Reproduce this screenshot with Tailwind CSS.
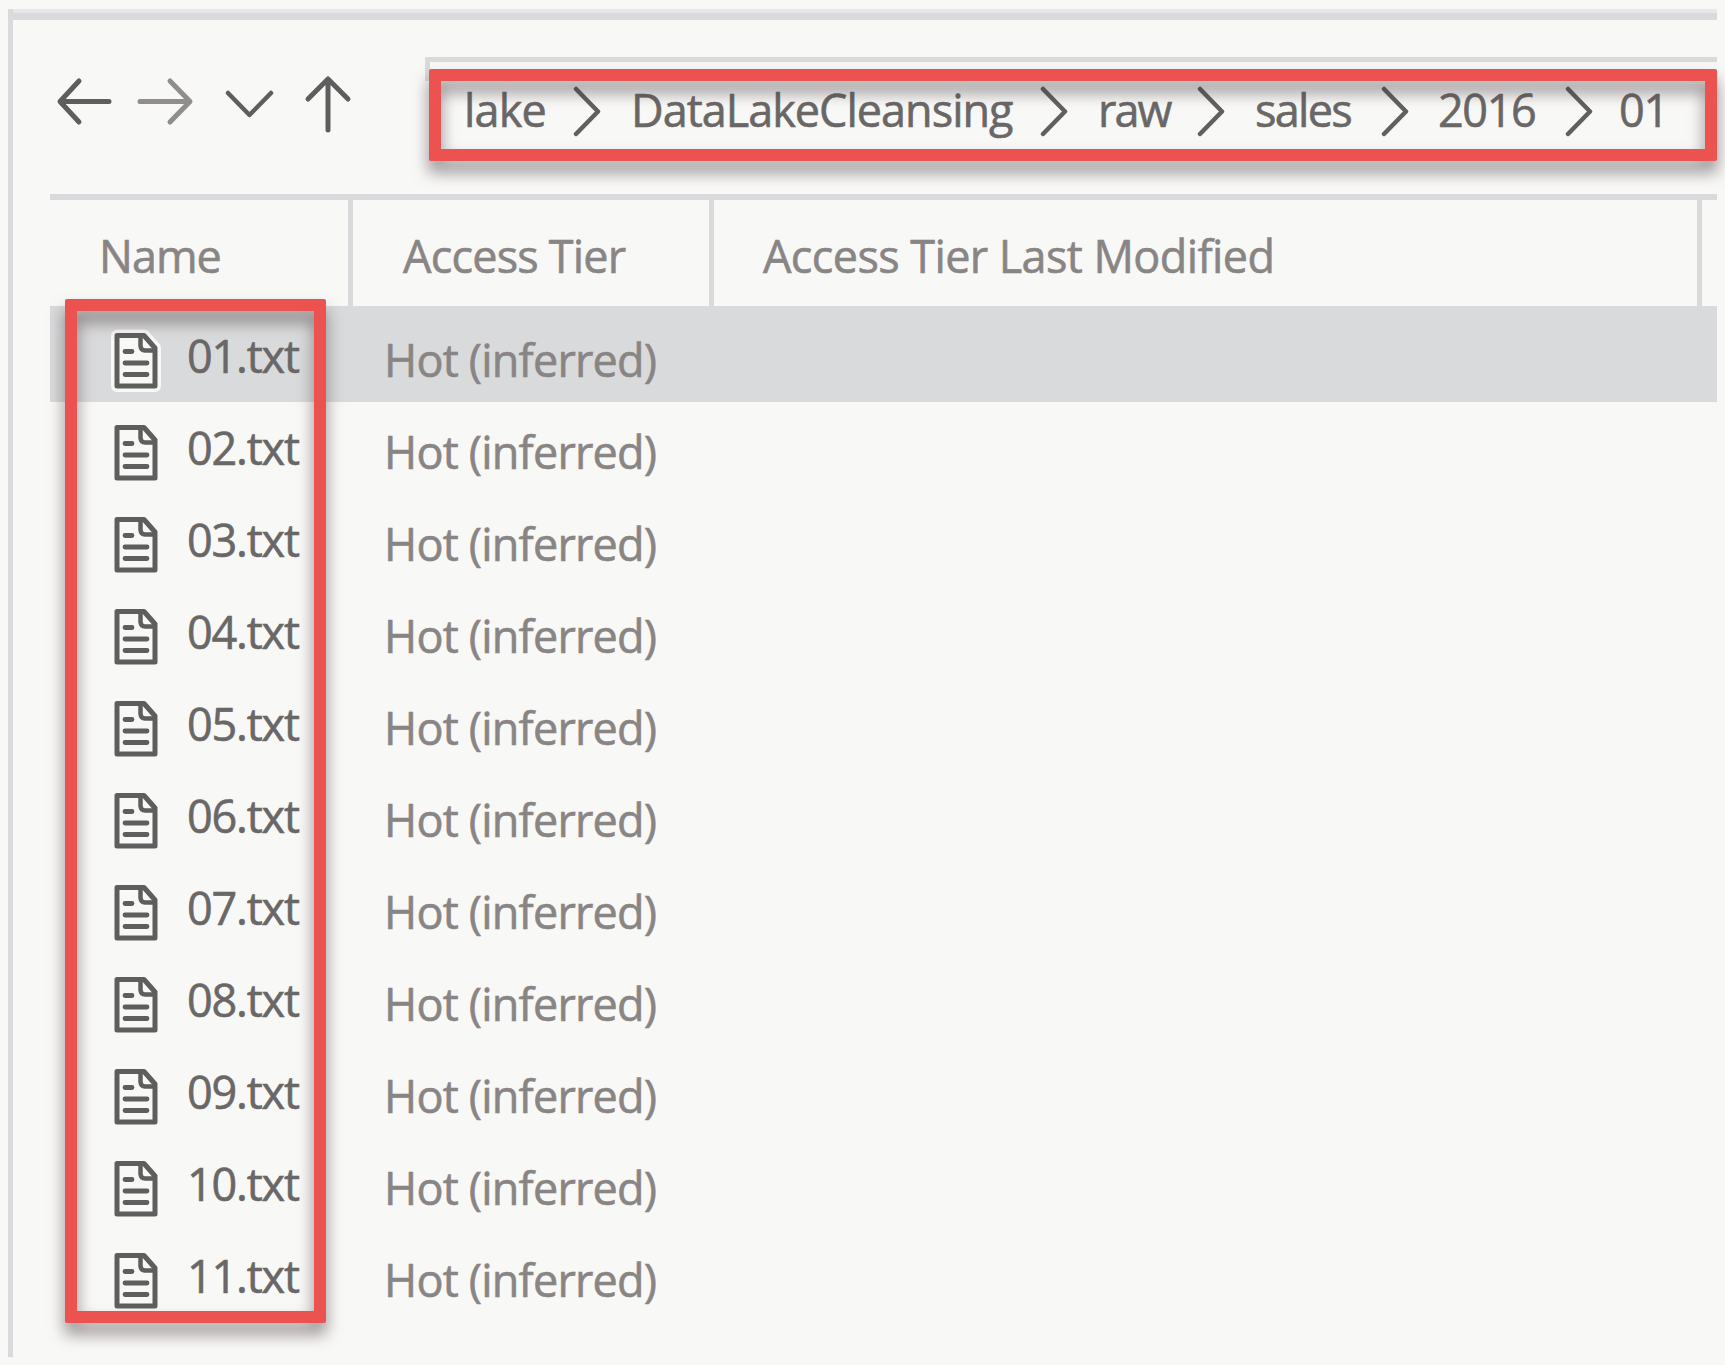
<!DOCTYPE html>
<html lang="en">
<head>
<meta charset="utf-8">
<title>Storage Explorer</title>
<script src="https://cdn.jsdelivr.net/npm/@tailwindcss/browser@4"></script>
</head>
<body class="relative h-[1365px] w-[1725px] overflow-hidden bg-[#f8f8f7] pt-[9px] pl-2 font-['Open_Sans','Noto_Sans',sans-serif] text-[45px] leading-[60px] whitespace-nowrap text-[#8a8585] [-webkit-text-stroke:0.6px_currentColor]">
  <svg class="hidden">
    <symbol id="chev" viewBox="0 0 30 52"><path d="M3 3 25 25.500 3 48" fill="none" stroke="#606060" stroke-width="4.500" stroke-linecap="round" stroke-linejoin="round"/></symbol>
    <symbol id="file" viewBox="0 0 48 60">
      <path d="M5 4.500H32L43 17V55H5Z" fill="#f8f8f7" stroke="#5e5e5e" stroke-width="5" stroke-linejoin="round"/>
      <path d="M28.500 5V15Q29 19.500 33 19.500H43" fill="none" stroke="#5e5e5e" stroke-width="4.500" stroke-linejoin="round"/>
      <path d="M13 20.500H20M13 32H35M13 43.500H35" fill="none" stroke="#5e5e5e" stroke-width="4.800" stroke-linecap="round"/>
    </symbol>
  </svg>

  <main class="h-[1348px] w-[1709px] border-l-[5px] border-[#dadadc]">
    <div class="h-[11px] border-t-4 border-[#e7e7e9] bg-[#d9dadc]"></div>

    <nav class="flex h-[174px]">
      <div class="flex w-[412px] pt-[52px] pl-[42px]">
        <svg class="h-[64px] w-[320px]" viewBox="55 72 320 64" fill="none" stroke="#5e5e5e" stroke-width="5" stroke-linecap="round" stroke-linejoin="round">
          <path d="M109 101.500H61M79 81 60 101.500 79 122"/>
          <path d="M140 101.500H189M170 81 190 101.500 170 122" stroke="#918d8d"/>
          <path d="M228 93 249.500 115 271 93" stroke-width="4.500"/>
          <path d="M328 130V80M308 99 328 79 348 99"/>
        </svg>
      </div>
      <div class="mt-[37px] flex h-[24px] flex-1 items-start border-t-[5px] border-l-[5px] border-[#dadadc] pt-[18px] pl-[34px] text-[#6a6767]">
        <span class="w-[109px] tracking-[-0.8px]">lake</span>
        <svg class="mt-[6px] mr-[28px] h-[52px] w-[30px] shrink-0"><use href="#chev"/></svg>
        <span class="w-[409px] tracking-[-1px]">DataLakeCleansing</span>
        <svg class="mt-[6px] mr-[28px] h-[52px] w-[30px] shrink-0"><use href="#chev"/></svg>
        <span class="w-[99px] tracking-[-1.9px]">raw</span>
        <svg class="mt-[6px] mr-[28px] h-[52px] w-[30px] shrink-0"><use href="#chev"/></svg>
        <span class="w-[126px] tracking-[-1.7px]">sales</span>
        <svg class="mt-[6px] mr-[27px] h-[52px] w-[30px] shrink-0"><use href="#chev"/></svg>
        <span class="w-[127px] tracking-[-1.4px]">2016</span>
        <svg class="mt-[6px] mr-[24px] h-[52px] w-[30px] shrink-0"><use href="#chev"/></svg>
        <span class="tracking-[-1.2px]">01</span>
      </div>
    </nav>

    <section class="ml-[37px]">
      <header class="flex h-[112px] border-t-[6px] border-[#dadadc]">
        <div class="w-[303px] border-r-[5px] border-[#dadadc] pt-[26px] pl-[49px] tracking-[-1px]">Name</div>
        <div class="w-[361px] border-r-[5px] border-[#dadadc] pt-[26px] pl-[50px] tracking-[-0.8px]">Access Tier</div>
        <div class="w-[988px] border-r-[5px] border-[#dadadc] pt-[26px] pl-[49px] tracking-[-0.6px]">Access Tier Last Modified</div>
      </header>
      <div id="rows"></div>
    </section>
  </main>

  <div class="absolute top-[69px] left-[429px] h-[92px] w-[1288px] rounded-[2px] border-[12px] border-[#ec524f] drop-shadow-[0_11px_8px_rgba(60,45,45,0.55)]"></div>
  <div class="absolute top-[299px] left-[65px] h-[1024px] w-[261px] rounded-[2px] border-[12px] border-[#ec524f] drop-shadow-[0_11px_8px_rgba(60,45,45,0.55)]"></div>

  <script>
    const rows = document.getElementById('rows');
    for (let i = 1; i <= 11; i++) {
      const name = String(i).padStart(2, '0') + '.txt';
      const first = i === 1;
      const halo = first ? '<path d="M5 4.500H32L43 17V55H5Z" fill="none" stroke="#f8f8f7" stroke-width="12" stroke-linejoin="round"/>' : '';
      rows.insertAdjacentHTML('beforeend',
        `<div class="flex ${first ? 'h-[96px] bg-[#d9dadc] pt-[25px]' : 'h-[92px] pt-[21px]'}">
          <svg class="ml-[62px] h-[60px] w-[48px] shrink-0 overflow-visible">${halo}<use href="#file"/></svg>
          <span class="-mt-[5px] ml-[27px] w-[197px] tracking-[-1.2px] text-[#6a6767]">${name}</span>
          <span class="-mt-[1px] tracking-[-0.8px]">Hot (inferred)</span>
        </div>`);
    }
  </script>
</body>
</html>
